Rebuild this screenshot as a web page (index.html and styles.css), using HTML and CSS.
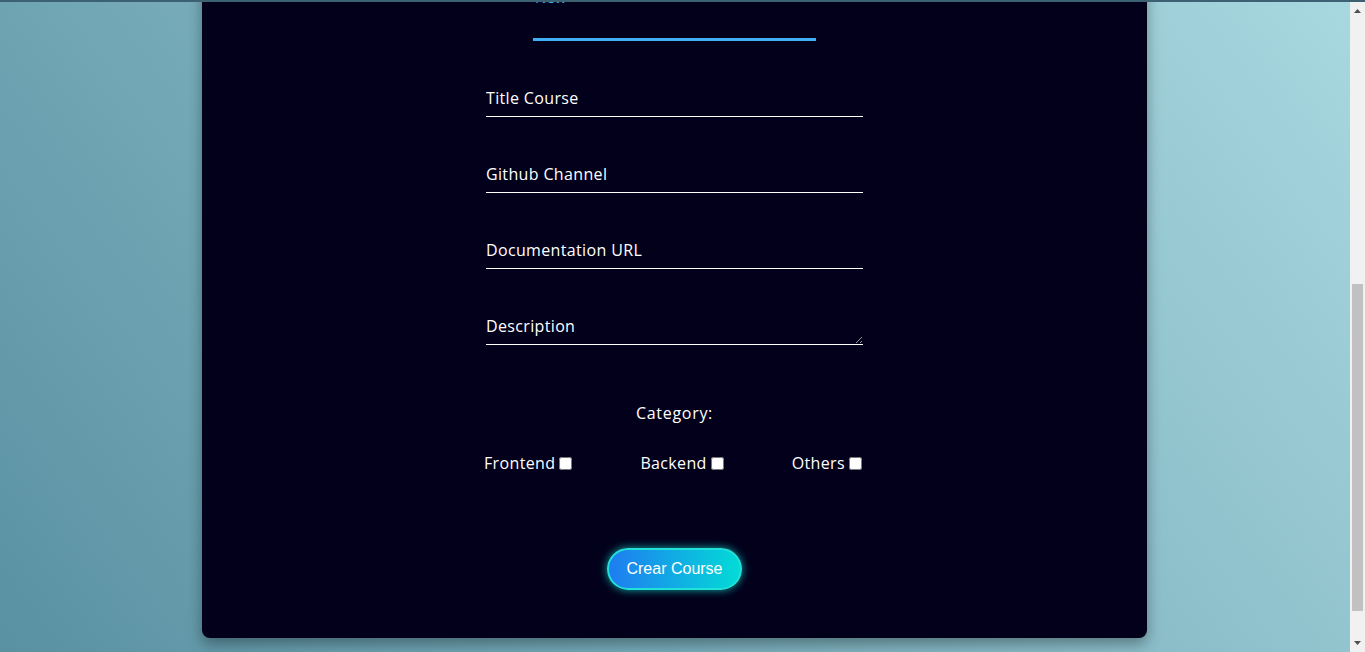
FILE: index.html
```html
<!DOCTYPE html>
<html lang="en">
<head>
<meta charset="utf-8">
<title>Create Course</title>
<link rel="stylesheet" href="styles.css">
</head>
<body>
<div class="topline"></div>
<div class="scroller">
  <main class="page">
    <section class="card">
      <div class="card-hero">
        <h1 class="hero-title">Course Manager</h1>
        <p class="hero-text">Register a new course with its repository and documentation.</p>
      </div>
      <div class="tabs">
        <span class="tab-label">New</span>
      </div>
      <form class="course-form">
        <input class="field" type="text" placeholder="Title Course">
        <input class="field" type="text" placeholder="Github Channel">
        <input class="field" type="text" placeholder="Documentation URL">
        <textarea class="field field-area" placeholder="Description"></textarea>
        <p class="category-title">Category:</p>
        <div class="category-row">
          <label class="check">Frontend<input type="checkbox"></label>
          <label class="check">Backend<input type="checkbox"></label>
          <label class="check">Others<input type="checkbox"></label>
        </div>
        <button class="submit" type="button">Crear Course</button>
      </form>
    </section>
  </main>
</div>
<div class="scrollbar" aria-hidden="true">
  <div class="sb-button">
    <svg width="15" height="17" viewBox="0 0 15 17"><path d="M4 13 L7.5 9 L11 13 Z" fill="#505050"/></svg>
  </div>
  <div class="sb-track">
    <div class="sb-thumb"></div>
  </div>
  <div class="sb-button">
    <svg width="15" height="17" viewBox="0 0 15 17"><path d="M4 6 L11 6 L7.5 10 Z" fill="#505050"/></svg>
  </div>
</div>
<script src="script.js"></script>
</body>
</html>
```
FILE: styles.css
```css
html {
  height: 100%;
}

body {
  margin: 0;
  height: 100%;
  overflow: hidden;
  display: flex;
  background: linear-gradient(53deg, #5a91a2 0%, #a8d8e0 100%);
  font-family: "Open Sans", "DejaVu Sans", sans-serif;
  color: #ffffff;
}

.topline {
  position: fixed;
  top: 0;
  left: 0;
  right: 0;
  height: 2px;
  background: #3b6172;
  z-index: 10;
}

.scroller {
  flex: 1;
  height: 100%;
  overflow-y: auto;
  scrollbar-width: none;
}

.scroller::-webkit-scrollbar {
  display: none;
}

.scrollbar {
  width: 15px;
  height: 100%;
  display: flex;
  flex-direction: column;
  background: #f1f1f1;
}

.sb-button {
  height: 17px;
  flex: none;
}

.sb-button svg {
  display: block;
}

.sb-track {
  flex: 1;
  padding: 0 2px;
}

.sb-thumb {
  margin-top: 267px;
  height: 327px;
  background: #c1c1c1;
}

.page {
  display: flex;
  justify-content: center;
  padding: 40px 1px 62px 0;
}

.card {
  width: 945px;
  box-sizing: border-box;
  background: #02001b;
  border-radius: 8px;
  box-shadow: 0 6px 14px rgba(0, 0, 0, 0.35);
  padding: 40px 0 48px;
  display: flex;
  flex-direction: column;
  align-items: center;
}

.card-hero {
  height: 437px;
  display: flex;
  flex-direction: column;
  align-items: center;
  justify-content: center;
}

.hero-title {
  margin: 0 0 12px;
  font-size: 32px;
  font-weight: 600;
}

.hero-text {
  margin: 0;
  font-size: 16px;
  color: #b9c3d6;
}

.tabs {
  width: 283px;
  padding-bottom: 30px;
  border-bottom: 3px solid #41aff7;
}

.tab-label {
  display: block;
  padding-left: 2px;
  font-size: 15px;
  line-height: 22px;
  color: #41aff7;
}

.course-form {
  width: 377px;
  margin-top: 46px;
  display: flex;
  flex-direction: column;
  letter-spacing: 0.35px;
}

.field {
  display: block;
  box-sizing: border-box;
  width: 100%;
  height: 30px;
  margin: 0;
  padding: 0 0 7px;
  border: 0;
  border-bottom: 1px solid #ffffff;
  background: transparent;
  color: #ffffff;
  font-family: inherit;
  font-size: 16px;
  font-weight: 500;
  letter-spacing: 0.35px;
  outline: none;
}

.field + .field {
  margin-top: 46px;
}

.field-area {
  padding: 0;
}

.field::placeholder {
  color: #ffffff;
  opacity: 1;
}

.category-title {
  margin: 57px 0 0;
  text-align: center;
  font-size: 16px;
  line-height: 22px;
  letter-spacing: 0.7px;
}

.category-row {
  margin-top: 28px;
  display: flex;
  justify-content: space-between;
}

.check {
  display: flex;
  align-items: center;
  gap: 4px;
  height: 22px;
  font-size: 16px;
  margin-left: -2px;
}

.check input {
  width: 13px;
  height: 13px;
  margin: 0 1px 0 0;
}

.submit {
  align-self: center;
  margin-top: 74px;
  box-sizing: border-box;
  height: 42px;
  padding: 0 17px;
  border: 2px solid #22e2d8;
  border-radius: 21px;
  background: linear-gradient(to right, #1f7cf1, #03dbd7);
  box-shadow: 0 0 9px rgba(20, 225, 215, 0.75);
  color: #ffffff;
  font-family: "Liberation Sans", Arial, sans-serif;
  font-size: 16px;
  letter-spacing: 0;
  cursor: pointer;
}
```
FILE: script.js
```js
(function () {
  var scroller = document.querySelector('.scroller');
  var tabs = document.querySelector('.tabs');
  var track = document.querySelector('.sb-track');
  var thumb = document.querySelector('.sb-thumb');

  function update() {
    var offset = tabs.getBoundingClientRect().bottom - 3 - 38;
    scroller.scrollTop = scroller.scrollTop + offset;
    var total = scroller.scrollHeight;
    var len = track.clientHeight;
    thumb.style.height = Math.round(scroller.clientHeight / total * len) + 'px';
    thumb.style.marginTop = Math.round(scroller.scrollTop / total * len) + 'px';
  }

  update();
  window.addEventListener('load', update);
})();
```
